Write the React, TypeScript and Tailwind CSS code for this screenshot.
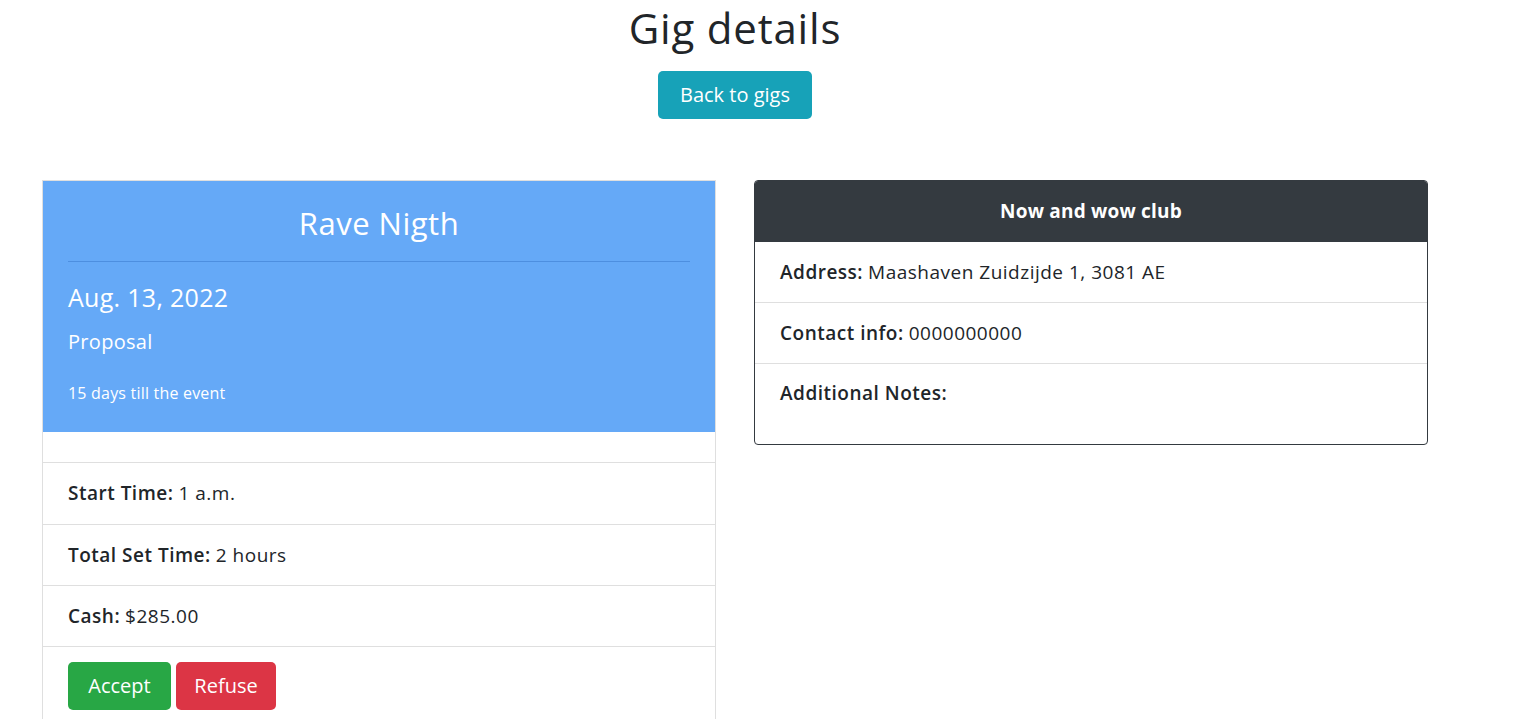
import React from 'react'

const font = { fontFamily: '"Open Sans", "Liberation Sans", sans-serif' }

function Row({ label, value, tall }: { label: string; value?: string; tall?: boolean }) {
  return (
    <div
      className={`flex items-center border-t border-[#dfdfdf] px-[25px] text-[19px] tracking-[0.5px] text-[#212529] ${
        tall ? 'h-[62px]' : 'h-[61px]'
      }`}
    >
      <span className="font-semibold">{label}</span>
      {value && <span className="ml-[5px]">{value}</span>}
    </div>
  )
}

export default function App() {
  return (
    <div className="min-h-[719px] bg-white text-[#212529]" style={font}>
      <div className="flex w-[1470px] flex-col items-center">
        <h1 className="mt-[3px] text-[42px] leading-[50px] tracking-[0.8px] text-[#212529]">Gig details</h1>
        <button className="mt-[18px] h-[48px] w-[154px] rounded-[5px] bg-[#17a2b8] text-[20px] text-white">
          Back to gigs
        </button>
      </div>

      <div className="mt-[61px] flex items-start gap-[38px] pl-[42px]">
        {/* gig card */}
        <div className="w-[674px] border border-[#dfdfdf] bg-white">
          <div className="bg-[#65a9f7] px-[25px] pb-[27px] pt-[20px] text-white">
            <div className="text-center text-[31px] leading-[44px] tracking-[0.5px]">Rave Nigth</div>
            <div className="mt-[16px] border-t border-[#4d8fe0]" />
            <div className="mt-[17px] text-[25px] leading-[36px] tracking-[0.3px]">Aug. 13, 2022</div>
            <div className="mt-[14px] text-[20px] leading-[26px] tracking-[0.3px]">Proposal</div>
            <div className="mt-[26px] text-[16px] leading-[24px] tracking-[0.2px]">15 days till the event</div>
          </div>
          <div className="h-[30px]" />
          <Row label="Start Time:" value="1 a.m." tall />
          <Row label="Total Set Time:" value="2 hours" />
          <Row label="Cash:" value="$285.00" />
          <div className="flex gap-[5px] border-t border-[#dfdfdf] px-[25px] pb-[12px] pt-[15px]">
            <button className="h-[48px] w-[103px] rounded-[5px] bg-[#28a745] text-[20px] text-white">Accept</button>
            <button className="h-[48px] w-[100px] rounded-[5px] bg-[#dc3545] text-[20px] text-white">Refuse</button>
          </div>
        </div>

        {/* venue card */}
        <div className="w-[674px] overflow-hidden rounded-[4px] border border-[#343a40] bg-white">
          <div className="flex h-[61px] items-center justify-center bg-[#343a40] text-[19px] font-bold tracking-[0.2px] text-white">
            Now and wow club
          </div>
          <div className="flex h-[60px] items-center px-[25px] text-[19px] tracking-[0.5px]">
            <span className="font-semibold">Address:</span>
            <span className="ml-[5px]">Maashaven Zuidzijde 1, 3081 AE</span>
          </div>
          <Row label="Contact info:" value="0000000000" />
          <div className="h-[81px] border-t border-[#dfdfdf] px-[25px] pt-[15px] text-[19px] tracking-[0.5px]">
            <span className="font-semibold">Additional Notes:</span>
          </div>
        </div>
      </div>
    </div>
  )
}
